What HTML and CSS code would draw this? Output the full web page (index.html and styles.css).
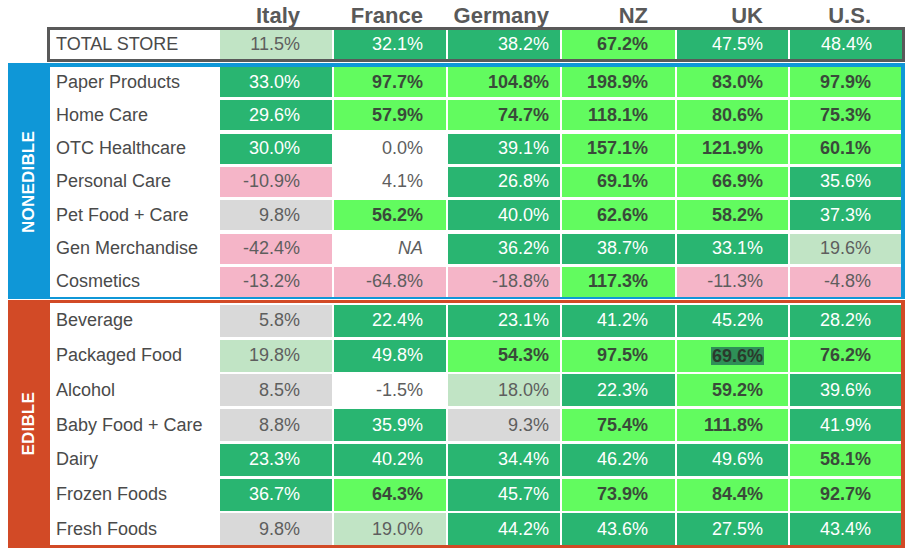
FILE: index.html
```html
<!DOCTYPE html>
<html lang="en">
<head>
<meta charset="utf-8">
<title>Growth by Category</title>
<link rel="stylesheet" href="styles.css">
</head>
<body>
<div class="page">
  <div class="head row">
    <div></div>
    <div class="hc">Italy</div>
    <div class="hc">France</div>
    <div class="hc">Germany</div>
    <div class="hc">NZ</div>
    <div class="hc">UK</div>
    <div class="hc">U.S.</div>
  </div>

  <div class="total">
    <div class="row trow">
      <div class="lbl">TOTAL STORE</div>
      <div class="c lg">11.5%</div>
      <div class="c dg">32.1%</div>
      <div class="c dg">38.2%</div>
      <div class="c bg">67.2%</div>
      <div class="c dg">47.5%</div>
      <div class="c dg">48.4%</div>
    </div>
  </div>

  <section class="group blue">
    <div class="side"><span>NONEDIBLE</span></div>
    <div class="rows">
      <div class="row">
        <div class="lbl">Paper Products</div>
        <div class="c dg">33.0%</div><div class="c bg">97.7%</div><div class="c bg">104.8%</div><div class="c bg">198.9%</div><div class="c bg">83.0%</div><div class="c bg">97.9%</div>
      </div>
      <div class="row">
        <div class="lbl">Home Care</div>
        <div class="c dg">29.6%</div><div class="c bg">57.9%</div><div class="c bg">74.7%</div><div class="c bg">118.1%</div><div class="c bg">80.6%</div><div class="c bg">75.3%</div>
      </div>
      <div class="row">
        <div class="lbl">OTC Healthcare</div>
        <div class="c dg">30.0%</div><div class="c w">0.0%</div><div class="c dg">39.1%</div><div class="c bg">157.1%</div><div class="c bg">121.9%</div><div class="c bg">60.1%</div>
      </div>
      <div class="row">
        <div class="lbl">Personal Care</div>
        <div class="c pk">-10.9%</div><div class="c w">4.1%</div><div class="c dg">26.8%</div><div class="c bg">69.1%</div><div class="c bg">66.9%</div><div class="c dg">35.6%</div>
      </div>
      <div class="row">
        <div class="lbl">Pet Food + Care</div>
        <div class="c gr">9.8%</div><div class="c bg">56.2%</div><div class="c dg">40.0%</div><div class="c bg">62.6%</div><div class="c bg">58.2%</div><div class="c dg">37.3%</div>
      </div>
      <div class="row">
        <div class="lbl">Gen Merchandise</div>
        <div class="c pk">-42.4%</div><div class="c w na">NA</div><div class="c dg">36.2%</div><div class="c dg">38.7%</div><div class="c dg">33.1%</div><div class="c lg">19.6%</div>
      </div>
      <div class="row">
        <div class="lbl">Cosmetics</div>
        <div class="c pk">-13.2%</div><div class="c pk">-64.8%</div><div class="c pk">-18.8%</div><div class="c bg">117.3%</div><div class="c pk">-11.3%</div><div class="c pk">-4.8%</div>
      </div>
    </div>
  </section>

  <section class="group red">
    <div class="side"><span>EDIBLE</span></div>
    <div class="rows">
      <div class="row">
        <div class="lbl">Beverage</div>
        <div class="c gr">5.8%</div><div class="c dg">22.4%</div><div class="c dg">23.1%</div><div class="c dg">41.2%</div><div class="c dg">45.2%</div><div class="c dg">28.2%</div>
      </div>
      <div class="row">
        <div class="lbl">Packaged Food</div>
        <div class="c lg">19.8%</div><div class="c dg">49.8%</div><div class="c bg">54.3%</div><div class="c bg">97.5%</div><div class="c bg"><span class="hl">69.6%</span></div><div class="c bg">76.2%</div>
      </div>
      <div class="row">
        <div class="lbl">Alcohol</div>
        <div class="c gr">8.5%</div><div class="c w">-1.5%</div><div class="c lg">18.0%</div><div class="c dg">22.3%</div><div class="c bg">59.2%</div><div class="c dg">39.6%</div>
      </div>
      <div class="row">
        <div class="lbl">Baby Food + Care</div>
        <div class="c gr">8.8%</div><div class="c dg">35.9%</div><div class="c gr">9.3%</div><div class="c bg">75.4%</div><div class="c bg">111.8%</div><div class="c dg">41.9%</div>
      </div>
      <div class="row">
        <div class="lbl">Dairy</div>
        <div class="c dg">23.3%</div><div class="c dg">40.2%</div><div class="c dg">34.4%</div><div class="c dg">46.2%</div><div class="c dg">49.6%</div><div class="c bg">58.1%</div>
      </div>
      <div class="row">
        <div class="lbl">Frozen Foods</div>
        <div class="c dg">36.7%</div><div class="c bg">64.3%</div><div class="c dg">45.7%</div><div class="c bg">73.9%</div><div class="c bg">84.4%</div><div class="c bg">92.7%</div>
      </div>
      <div class="row">
        <div class="lbl">Fresh Foods</div>
        <div class="c gr">9.8%</div><div class="c lg">19.0%</div><div class="c dg">44.2%</div><div class="c dg">43.6%</div><div class="c dg">27.5%</div><div class="c dg">43.4%</div>
      </div>
    </div>
  </section>
</div>
</body>
</html>
```

FILE: styles.css
```css
* { box-sizing: border-box; }

html, body {
  margin: 0;
  padding: 0;
  background: #ffffff;
}

body {
  font-family: "Liberation Sans", Arial, sans-serif;
  color: #595959;
}

.page {
  width: 910px;
  height: 558px;
  padding-left: 8px;
  overflow: hidden;
}

.row {
  display: grid;
  grid-template-columns: 168px 112px 112px 112px 113px 111px 111px;
  column-gap: 2px;
}

/* per-column right padding, shared by header and data cells */
.row > :nth-child(2) { padding-right: 32px; }
.row > :nth-child(3) { padding-right: 23px; }
.row > :nth-child(4) { padding-right: 11px; }
.row > :nth-child(5) { padding-right: 27px; }
.row > :nth-child(6) { padding-right: 25px; }
.row > :nth-child(7) { padding-right: 30px; }

/* header */
.head {
  margin-left: 42px;
  height: 27px;
  align-items: end;
}

.hc {
  font-size: 22px;
  font-weight: bold;
  line-height: 22px;
  text-align: right;
  color: #595959;
}

/* total store */
.total {
  margin-left: 39px;
  width: 858px;
  border: 3px solid #595959;
  margin-bottom: 1px;
}

.trow {
  height: 29px;
  grid-template-columns: 168px 112px 112px 112px 113px 111px 112px;
}

/* groups */
.group {
  display: flex;
  width: 897px;
}

.group.blue {
  background: #0f97d7;
  padding: 4px 4px 2px 0;
  margin-bottom: 1px;
}

.group.red {
  background: #d24a26;
  padding: 3px 4px 3px 0;
}

.side {
  width: 42px;
  display: flex;
  align-items: center;
  justify-content: center;
}

.side span {
  writing-mode: vertical-rl;
  transform: rotate(180deg);
  color: #ffffff;
  font-weight: bold;
  font-size: 17px;
  letter-spacing: 0.2px;
}

.rows {
  width: 851px;
  background: #ffffff;
  display: flex;
  flex-direction: column;
}

.blue .rows {
  gap: 3.33px;
}

.blue .row {
  height: 30px;
}

.red .rows {
  gap: 2.75px;
  padding-top: 2px;
}

.red .row {
  height: 32px;
}

.lbl {
  display: flex;
  align-items: center;
  padding-left: 6px;
  font-size: 18px;
  color: #4a4a4a;
  white-space: nowrap;
}

.c {
  display: flex;
  align-items: center;
  justify-content: flex-end;
  font-size: 18px;
  white-space: nowrap;
}

.dg { background: #29b571; color: #ffffff; }
.bg { background: #62fb5f; color: #3a4a3a; font-weight: bold; }
.lg { background: #c1e4c5; color: #5e5e5e; }
.gr { background: #d9d9d9; color: #5e5e5e; }
.pk { background: #f5b5c8; color: #5e5e5e; }
.w  { background: #ffffff; color: #5e5e5e; }

.na { font-style: italic; }

.hl {
  background: #2e8f57;
  color: #2a3a2c;
  line-height: 18px;
  padding: 0 1px;
  margin-right: -1px;
}
```
